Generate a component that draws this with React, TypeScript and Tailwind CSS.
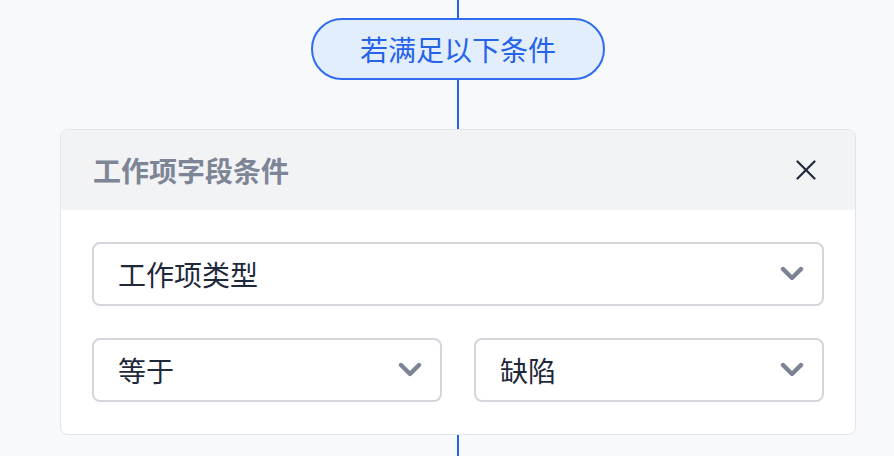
import React from "react";

const cjk = { fontFamily: '"Noto Sans CJK SC", "Noto Sans", sans-serif' };

const Chevron = () => (
  <svg width="24" height="16" viewBox="0 0 24 16" fill="none">
    <polyline
      points="3,3 12,12 21,3"
      stroke="#7c8395"
      strokeWidth="4.4"
      strokeLinecap="round"
      strokeLinejoin="round"
    />
  </svg>
);

const CloseIcon = () => (
  <svg width="20" height="20" viewBox="0 0 20 20" fill="none">
    <path d="M1.5 1.5 18.5 18.5 M18.5 1.5 1.5 18.5" stroke="#1e293b" strokeWidth="2.2" strokeLinecap="round" />
  </svg>
);

const Select = ({ label, className = "" }: { label: string; className?: string }) => (
  <div
    className={`flex h-16 items-center justify-between rounded-lg border-2 border-[#d3d6dd] bg-white pl-6 pr-[18px] ${className}`}
  >
    <span className="text-[28px] leading-none text-[#1e293b]">{label}</span>
    <Chevron />
  </div>
);

export default function App() {
  return (
    <div className="h-[456px] w-[894px] overflow-hidden bg-[#f8f9fa] pl-[60px]" style={cjk}>
      <div className="flex w-[796px] flex-col items-center">
        <div className="h-[18px] w-[2px] shrink-0 bg-[#2563eb]" />
        <div className="flex h-[62px] w-[294px] shrink-0 items-center justify-center rounded-full border-2 border-[#2f6bf0] bg-[#e3eefd]">
          <span className="text-[28px] leading-none text-[#2563eb]">若满足以下条件</span>
        </div>
        <div className="h-[49px] w-[2px] shrink-0 bg-[#2563eb]" />
        <div className="w-[796px] shrink-0 overflow-hidden rounded-lg border border-[#e2e5ea] bg-white">
          <div className="flex h-20 items-center justify-between bg-[#f2f3f5] pl-8 pr-[39px]">
            <span className="text-[28px] font-bold leading-none text-[#7d8596]">工作项字段条件</span>
            <CloseIcon />
          </div>
          <div className="flex flex-col gap-8 px-[31px] py-8">
            <Select label="工作项类型" />
            <div className="flex gap-8">
              <Select label="等于" className="flex-1" />
              <Select label="缺陷" className="flex-1" />
            </div>
          </div>
        </div>
        <div className="h-[30px] w-[2px] shrink-0 bg-[#2563eb]" />
      </div>
    </div>
  );
}
